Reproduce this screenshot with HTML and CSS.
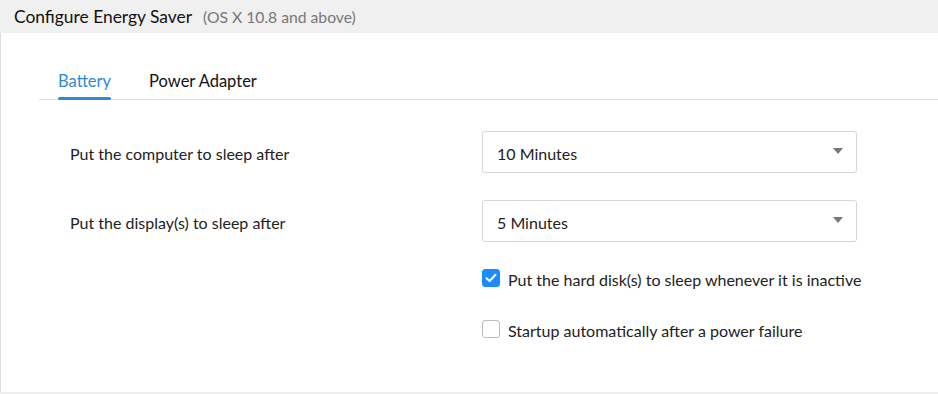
FILE: index.html
```html
<!DOCTYPE html>
<html lang="en">
<head>
    <meta charset="UTF-8">
    <meta name="viewport" content="width=device-width, initial-scale=1.0">
    <title>Configure Energy Saver</title>
    <link rel="stylesheet" href="styles.css">
</head>
<body>
    <div class="panel">
        <div class="panel-header">
            <span class="title">Configure Energy Saver</span>
            <span class="subtitle">(OS X 10.8 and above)</span>
        </div>
        <div class="panel-body">
            <div class="tabs">
                <div class="tab active">Battery</div>
                <div class="tab">Power Adapter</div>
            </div>
            <div class="form">
                <div class="row">
                    <label class="row-label">Put the computer to sleep after</label>
                    <div class="select">
                        <span>10 Minutes</span>
                        <span class="caret"></span>
                    </div>
                </div>
                <div class="row">
                    <label class="row-label">Put the display(s) to sleep after</label>
                    <div class="select">
                        <span>5 Minutes</span>
                        <span class="caret"></span>
                    </div>
                </div>
                <div class="check-row first">
                    <span class="box checked">
                        <svg width="12" height="10" viewBox="0 0 12 10"><path d="M1.5 5.2 L4.6 8 L10.5 1.8" fill="none" stroke="#fff" stroke-width="2" stroke-linecap="round" stroke-linejoin="round"/></svg>
                    </span>
                    <span class="check-label">Put the hard disk(s) to sleep whenever it is inactive</span>
                </div>
                <div class="check-row">
                    <span class="box"></span>
                    <span class="check-label">Startup automatically after a power failure</span>
                </div>
            </div>
        </div>
    </div>
</body>
</html>
```

FILE: styles.css
```css
body {
    margin: 0;
    font-family: Lato, "Open Sans", sans-serif;
    color: #222;
    background: #fff;
}
.panel {
    width: 938px;
    height: 394px;
    box-sizing: border-box;
    border-bottom: 2px solid #eee;
}
.panel-header {
    height: 33px;
    background: #f0f0f0;
    display: flex;
    align-items: center;
    padding-left: 14px;
    gap: 11px;
}
.title {
    font-size: 17.4px;
    color: #111;
}
.subtitle {
    font-size: 15.7px;
    color: #777;
}
.panel-body {
    border-left: 1px solid #ddd;
    height: 359px;
    box-sizing: border-box;
    padding-top: 36px;
}
.tabs {
    margin-left: 38px;
    border-bottom: 1px solid #ddd;
    display: flex;
    gap: 38px;
    padding-left: 19px;
    height: 30px;
}
.tab {
    font-size: 16.5px;
    color: #111;
    position: relative;
    padding-top: 2px;
}
.tab.active {
    color: #2d8ad8;
}
.tab.active::after {
    content: "";
    position: absolute;
    left: 0;
    right: 0;
    bottom: -1px;
    height: 3px;
    border-radius: 2px;
    background: #2d8ad8;
}
.form {
    padding-top: 31px;
    padding-left: 69px;
}
.row {
    display: flex;
    align-items: center;
    height: 42px;
    margin-bottom: 27px;
}
.row-label {
    width: 412px;
    font-size: 16px;
    padding-top: 3px;
}
.select {
    width: 375px;
    height: 42px;
    box-sizing: border-box;
    border: 1px solid #d6d6d6;
    border-radius: 3px;
    display: flex;
    align-items: center;
    justify-content: space-between;
    padding: 3px 13px 0 14px;
    font-size: 16px;
}
.caret {
    width: 0;
    height: 0;
    border-left: 5px solid transparent;
    border-right: 5px solid transparent;
    border-top: 6px solid #777;
    margin-top: -6px;
}
.check-row {
    display: flex;
    align-items: center;
    margin-left: 412px;
    gap: 8px;
    height: 18px;
    margin-bottom: 33px;
}
.check-row.first {
    margin-top: 2px;
}
.box {
    width: 18px;
    height: 18px;
    box-sizing: border-box;
    border: 1px solid #bbb;
    border-radius: 3px;
    display: flex;
    align-items: center;
    justify-content: center;
}
.box.checked {
    background: #1a8cff;
    border-color: #1a8cff;
}
.check-label {
    font-size: 16px;
    padding-top: 2px;
}
```
